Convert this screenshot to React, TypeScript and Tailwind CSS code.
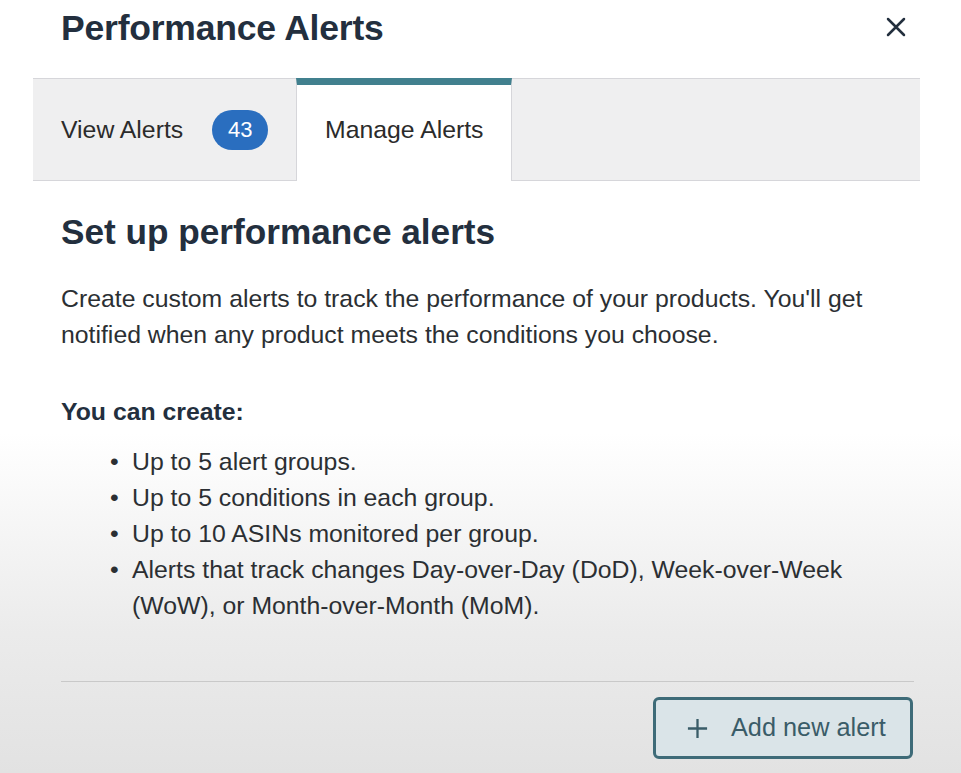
import React from 'react';

const items = [
  'Up to 5 alert groups.',
  'Up to 5 conditions in each group.',
  'Up to 10 ASINs monitored per group.',
  'Alerts that track changes Day-over-Day (DoD), Week-over-Week (WoW), or Month-over-Month (MoM).',
];

export default function App() {
  return (
    <div
      className="w-full h-[773px] overflow-hidden bg-[linear-gradient(to_bottom,#ffffff_0%,#ffffff_56%,#ebebeb_82%,#e2e2e2_100%)] text-[#232f3e]"
      style={{ fontFamily: '"Liberation Sans", Arial, sans-serif' }}
    >
      {/* Header */}
      <div className="h-[78px] flex items-start justify-between pl-[61px] pr-[55px] pt-[7px]">
        <h1 className="text-[35.5px] leading-[42px] font-bold tracking-[-0.2px]">Performance Alerts</h1>
        <button className="mt-[10px] w-[20px] h-[20px] flex items-center justify-center text-[#232f3e]">
          <svg width="20" height="20" viewBox="0 0 20 20" fill="none" stroke="currentColor" strokeWidth="2.5" strokeLinecap="round">
            <path d="M2 2 L18 18 M18 2 L2 18" />
          </svg>
        </button>
      </div>

      {/* Tabs */}
      <div className="mx-[33px] w-[887px] h-[103px] flex bg-[#efeff0] border-t border-b border-[#d6d6da]">
        <div className="w-[263px] flex items-center pl-[28px]">
          <span className="text-[24.8px] text-[#2b2b2b]">View Alerts</span>
          <span className="ml-[29px] w-[56px] h-[40px] rounded-full bg-[#2a6ebf] text-white text-[22px] flex items-center justify-center">
            43
          </span>
        </div>
        <div className="w-[216px] -mt-px -mb-px bg-white border-t-[7px] border-t-[#41808e] border-l border-r border-[#d6d6da] flex items-center pl-[28px] pb-[7px]">
          <span className="text-[24.8px] text-[#2b2b2b]">Manage Alerts</span>
        </div>
      </div>

      {/* Content */}
      <div className="pl-[61px] pr-[47px]">
        <h2 className="mt-[30px] text-[35.2px] leading-[42px] font-bold">Set up performance alerts</h2>
        <p className="mt-[28px] text-[24.8px] leading-[36px] text-[#2b2f33]">
          Create custom alerts to track the performance of your products. You'll get notified when any product meets
          the conditions you choose.
        </p>
        <p className="mt-[41px] text-[24.8px] leading-[36px] font-bold text-[#232f3e]">You can create:</p>
        <ul className="mt-[14px] text-[24.8px] leading-[36px] text-[#2b2f33]">
          {items.map((item) => (
            <li key={item} className="flex">
              <span className="ml-[49px] w-[22px] shrink-0">•</span>
              <span className="pr-[60px]">{item}</span>
            </li>
          ))}
        </ul>
        <div className="mt-[57px] h-px bg-[#c9c9c9]" />
        <div className="mt-[15px] flex justify-end">
          <button className="mr-px h-[62px] w-[260px] flex items-center pl-[30px] gap-[22px] border-[3px] border-[#3e6b78] rounded-[6px] bg-[#dae4e8] text-[#3a5c68]">
            <svg width="23" height="23" viewBox="0 0 24 24" fill="none" stroke="currentColor" strokeWidth="2.4">
              <path d="M12 2 V22 M2 12 H22" />
            </svg>
            <span className="text-[25.3px]">Add new alert</span>
          </button>
        </div>
      </div>
    </div>
  );
}
